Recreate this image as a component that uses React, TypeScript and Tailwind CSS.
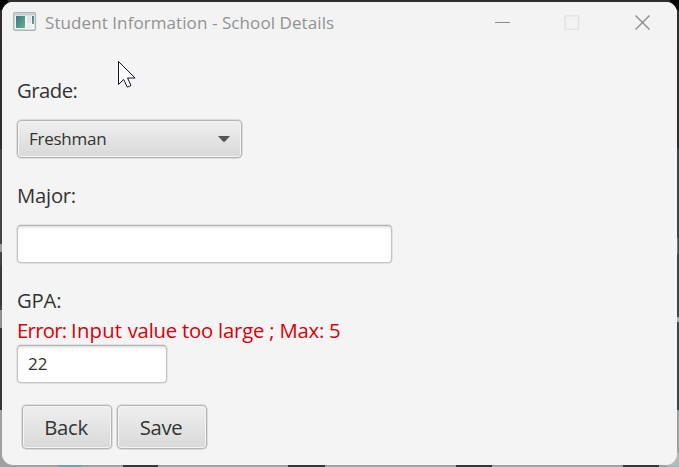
import type { ReactNode } from "react";

const BUTTON_FACE =
  "rounded-[4px] border border-[#b5b5b5] bg-gradient-to-b from-[#efefef] to-[#d9d9d9] shadow-[inset_0_0_0_1px_#f3f3f3,0_0_0_0.5px_#c4c4c4]";
const FIELD_FACE =
  "rounded-[4px] border border-[#c4c4c4] border-t-[#b4b4b4] bg-white shadow-[inset_0_2px_3px_-1px_#d4d4d4,0_0_0_0.5px_#d0d0d0]";

function Label({ children, className = "" }: { children: ReactNode; className?: string }) {
  return (
    <div className={`h-[30px] whitespace-nowrap text-[20.3px] leading-[30px] ${className}`}>
      {children}
    </div>
  );
}

function AppIcon() {
  return (
    <svg width="24" height="20" viewBox="0 0 24 20" className="shrink-0">
      <defs>
        <linearGradient id="pane" x1="0" y1="0" x2="1" y2="1">
          <stop offset="0" stopColor="#3c7398" />
          <stop offset="1" stopColor="#62b878" />
        </linearGradient>
      </defs>
      <rect x="0.8" y="0.8" width="21.6" height="17.4" rx="1.2" fill="#f4f5f6" stroke="#adb3b7" strokeWidth="1.4" />
      <rect x="1.5" y="1.5" width="20" height="2" fill="#c7cccf" />
      <rect x="3" y="4" width="9" height="12" fill="url(#pane)" />
      <rect x="14" y="4" width="4" height="7" fill="#e2e5e6" />
      <rect x="14" y="13" width="4" height="3" fill="#e8eaeb" />
      <rect x="19" y="4" width="2" height="8" fill="url(#pane)" />
    </svg>
  );
}

function Backdrop() {
  return (
    <div className="absolute inset-0 flex flex-col bg-[#2f2d2e]">
      <div className="flex h-[149px] justify-between">
        <div className="h-[10px] w-[8px] bg-black" />
        <div className="h-[10px] w-[9px] bg-black" />
      </div>
      <div className="flex h-[261px] justify-between">
        <div className="flex w-1 flex-col bg-[#444444]">
          <div className="mt-[95px] h-[8px] w-[2px] shrink-0 bg-[#999999]" />
          <div className="mt-[13px] h-[40px] shrink-0 bg-[#3a3a3a]" />
          <div className="mt-[5px] h-[18px] shrink-0 bg-[#929292]" />
          <div className="h-full bg-[#373737]" />
        </div>
        <div className="flex w-2 flex-col bg-[#424446]">
          <div className="mt-[89px] h-[16px] w-[7px] shrink-0 bg-[#777777]" />
          <div className="mt-[63px] h-[5px] shrink-0 bg-[#b0b0b0]" />
        </div>
      </div>
      <div className="flex h-[57px] items-end bg-[#a0a0a0]">
        <div className="ml-[59px] h-[2px] w-[23px] bg-[#7f9ca8]" />
        <div className="ml-[41px] h-[2px] w-[35px] bg-[#383838]" />
        <div className="ml-[130px] h-[2px] w-[37px] bg-[#383838]" />
        <div className="ml-[131px] h-[2px] w-[36px] bg-[#383838]" />
        <div className="ml-[131px] h-[2px] w-[36px] bg-[#383838]" />
        <div className="ml-auto h-[14px] w-[12px] border-b-2 border-[#a8b8bd] bg-[#b9b9b9]" />
      </div>
    </div>
  );
}

export default function App() {
  return (
    <div className="relative h-[467px] w-[679px] overflow-hidden p-[2px] font-['Open_Sans','Noto_Sans',sans-serif] text-[#333333]">
      <Backdrop />
      <main className="relative flex h-[463px] w-[675px] flex-col overflow-hidden rounded-[11px] bg-[#f4f4f4]">
        <header className="flex h-[43px] shrink-0 items-start bg-[#f3f3f3] pl-[11px]">
          <div className="pt-[10px]">
            <AppIcon />
          </div>
          <h1 className="ml-[8px] mt-[6px] whitespace-nowrap text-[17px] leading-[29px] tracking-[0.08px] text-[#929292]">
            Student Information - School Details
          </h1>
          <div className="ml-auto mr-[26px] mt-[13px] flex gap-[53px] text-[#8c8c8c]">
            <svg width="16" height="16" viewBox="0 0 16 16">
              <path d="M0 7.5h15" stroke="currentColor" />
            </svg>
            <svg width="16" height="16" viewBox="0 0 16 16" fill="none">
              <rect x="1" y="0.8" width="13.5" height="13.5" rx="1" stroke="#e2e2e2" strokeWidth="1.3" />
            </svg>
            <svg width="16" height="16" viewBox="0 0 16 16" className="ml-[2px]">
              <path d="M.5 .5l14 14M14.5 .5l-14 14" stroke="currentColor" strokeWidth="1.4" />
            </svg>
          </div>
        </header>

        <section className="flex flex-col items-start pl-[15px] pt-[30px]">
          <Label className="tracking-[-0.5px]">Grade:</Label>
          <button className={`mt-[15px] flex h-[38px] w-[225px] items-center justify-between pl-[11px] pr-[11px] ${BUTTON_FACE}`}>
            <span className="text-[17px] leading-[24px] tracking-[-0.25px]">Freshman</span>
            <svg width="12" height="6" viewBox="0 0 12 6">
              <path d="M0 0h12L7 5.5Q6 6.3 5 5.5Z" fill="#555555" />
            </svg>
          </button>
          <Label className="mt-[22px] tracking-[-0.25px]">Major:</Label>
          <div className={`mt-[15px] h-[38px] w-[375px] ${FIELD_FACE}`} />
          <Label className="mt-[22px] tracking-[-0.2px]">GPA:</Label>
          <Label className="tracking-[-0.21px] text-[#d90008]">
            <span className="tracking-[-0.7px]">Error: </span>
            <span className="tracking-[0.2px]">Input </span>
            value too large ; Max: 5
          </Label>
          <div className={`flex h-[38px] w-[150px] items-center pl-[10px] text-[17px] ${FIELD_FACE}`}>22</div>
          <div className="ml-[5px] mt-[22px] flex gap-[5px]">
            <button className={`h-[44px] w-[90px] pr-[2px] text-[20.3px] tracking-[-0.3px] ${BUTTON_FACE}`}>Back</button>
            <button className={`h-[44px] w-[90px] pr-[2px] text-[20.3px] tracking-[-0.3px] ${BUTTON_FACE}`}>Save</button>
          </div>
        </section>
      </main>

      <svg className="absolute left-[117px] top-[60px]" width="21" height="30" viewBox="0 0 21 30">
        <path d="M1.5 1.5v23l5.2-5 3.6 7.7 3.7-1.7-3.5-7.5h7.6z" fill="#fff" stroke="#14142b" strokeWidth="1" />
      </svg>
    </div>
  );
}
